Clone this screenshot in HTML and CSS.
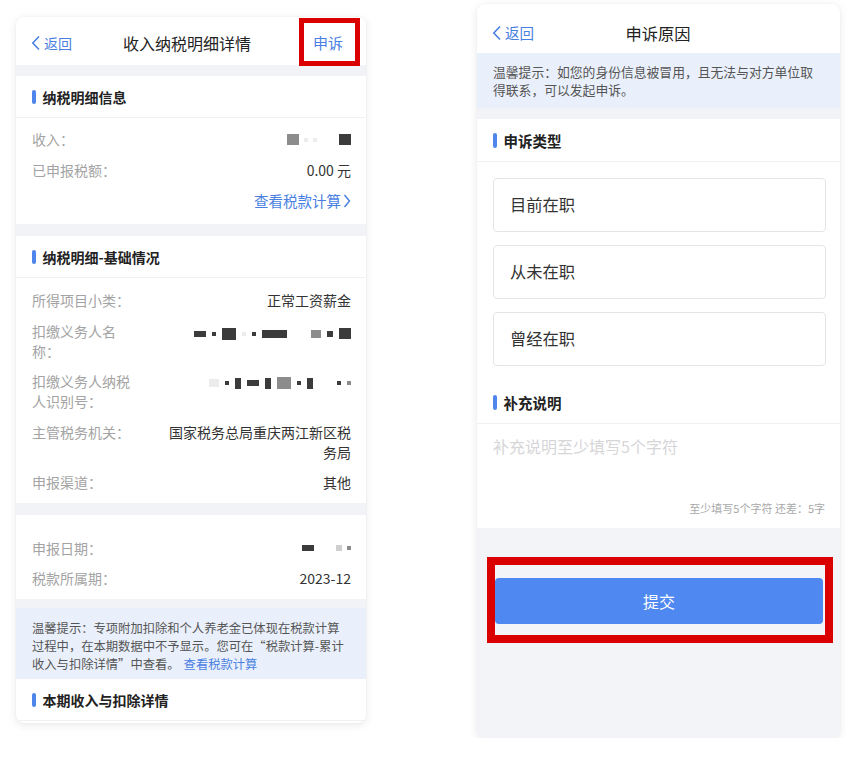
FILE: index.html
```html
<!doctype html>
<html>

<head>
  <meta charset="utf-8">
  <title>申诉</title>
  <link rel="stylesheet" href="styles.css">
</head>

<body>
  <div class="stage">

    <!-- 左：收入纳税明细详情 -->
    <div class="phone phone-left">
      <div class="nav">
        <a class="back">
          <svg class="back__icon" viewBox="0 0 10 16"><polyline points="8 1.5 1.8 8 8 14.5" /></svg>返回
        </a>
        <div class="nav__title">收入纳税明细详情</div>
        <a class="nav__action">申诉<span class="mark mark-appeal"></span></a>
      </div>

      <div class="gap"></div>

      <div class="block">
        <div class="block__title">纳税明细信息</div>
        <div class="block__body block__body--first">
          <div class="row">
            <span class="row__label">收入：</span>
            <span class="mosaic">
              <i class="px m tall wide"></i><i class="px xl sm"></i><i class="px xl sm"></i><i class="px sp"></i><i class="px d tall wide"></i>
            </span>
          </div>
          <div class="row">
            <span class="row__label">已申报税额：</span>
            <span class="row__value">0.00 元</span>
          </div>
          <div class="row row--link">
            <a class="link">查看税款计算<svg class="link__icon" viewBox="0 0 8 14"><polyline points="1.5 1 6.5 7 1.5 13" /></svg></a>
          </div>
        </div>
      </div>

      <div class="gap gap--wide"></div>

      <div class="block">
        <div class="block__title">纳税明细-基础情况</div>
        <div class="block__body block__body--detail">
          <div class="row row--wrap">
            <span class="row__label">所得项目小类：</span>
            <span class="row__value">正常工资薪金</span>
          </div>
          <div class="row row--wrap">
            <span class="row__label">扣缴义务人名称：</span>
            <span class="row__value">
              <span class="mosaic mosaic--wide">
                <i class="px d wide"></i><i class="px d sm"></i><i class="px d block14"></i><i class="px xl sm"></i><i class="px d sm"></i><i class="px d bar25"></i><i class="px sp"></i><i class="px m bar10"></i><i class="px d"></i><i class="px d tall wide"></i>
              </span>
            </span>
          </div>
          <div class="row row--wrap">
            <span class="row__label">扣缴义务人纳税人识别号：</span>
            <span class="row__value">
              <span class="mosaic mosaic--wide">
                <i class="px xl bar10"></i><i class="px d sm"></i><i class="px d tall"></i><i class="px d wide"></i><i class="px d tall"></i><i class="px m block14"></i><i class="px d sm"></i><i class="px d tall"></i><i class="px sp"></i><i class="px d sm"></i><i class="px m sm"></i>
              </span>
            </span>
          </div>
          <div class="row row--wrap">
            <span class="row__label">主管税务机关：</span>
            <span class="row__value">国家税务总局重庆两江新区税务局</span>
          </div>
          <div class="row row--wrap">
            <span class="row__label">申报渠道：</span>
            <span class="row__value">其他</span>
          </div>
        </div>
      </div>

      <div class="gap gap--wide"></div>

      <div class="block">
        <div class="block__body block__body--dates">
          <div class="row">
            <span class="row__label">申报日期：</span>
            <span class="mosaic">
              <i class="px d wide"></i><i class="px sp"></i><i class="px l"></i><i class="px m sm"></i>
            </span>
          </div>
          <div class="row">
            <span class="row__label">税款所属期：</span>
            <span class="row__value">2023-12</span>
          </div>
        </div>
      </div>

      <div class="gap gap--narrow"></div>

      <div class="tip tip--left">温馨提示：专项附加扣除和个人养老金已体现在税款计算过程中，在本期数据中不予显示。您可在“税款计算-累计收入与扣除详情”中查看。<a class="link">查看税款计算</a></div>

      <div class="block">
        <div class="block__title">本期收入与扣除详情</div>
      </div>
    </div>

    <!-- 右：申诉原因 -->
    <div class="phone phone-right">
      <div class="nav nav--right">
        <a class="back">
          <svg class="back__icon" viewBox="0 0 10 16"><polyline points="8 1.5 1.8 8 8 14.5" /></svg>返回
        </a>
        <div class="nav__title">申诉原因</div>
        <span></span>
      </div>

      <div class="tip tip--right">温馨提示：如您的身份信息被冒用，且无法与对方单位取得联系，可以发起申诉。</div>

      <div class="gap"></div>

      <div class="block block--form">
        <div class="block__title">申诉类型</div>
        <div class="options">
          <div class="option">目前在职</div>
          <div class="option">从未在职</div>
          <div class="option">曾经在职</div>
        </div>
        <div class="block__title">补充说明</div>
        <div class="remark">
          <div class="remark__placeholder">补充说明至少填写5个字符</div>
          <div class="remark__count">至少填写5个字符 还差：5字</div>
        </div>
      </div>

      <div class="footer">
        <div class="submit-wrap">
          <button class="submit">提交</button>
          <span class="mark mark-submit"></span>
        </div>
      </div>
    </div>

  </div>
</body>

</html>
```

FILE: styles.css
```css
* {
  margin: 0;
  padding: 0;
  box-sizing: border-box;
}

body {
  background: #fff;
  font-family: "Noto Sans CJK SC", "Noto Sans", sans-serif;
  color: #333;
}

.stage {
  display: flex;
  align-items: flex-start;
  padding-left: 16px;
  gap: 111px;
}

.phone {
  background: #fff;
  border-radius: 8px;
  overflow: hidden;
  box-shadow: 0 2px 10px rgba(0, 0, 0, 0.09), 0 0 2px rgba(0, 0, 0, 0.05);
}

.phone-left {
  width: 350px;
  height: 706px;
  margin-top: 17px;
}

.phone-right {
  width: 363px;
  height: 734px;
  margin-top: 4px;
  display: flex;
  flex-direction: column;
}

/* 导航 */
.nav {
  height: 48px;
  display: grid;
  grid-template-columns: 1fr auto 1fr;
  align-items: center;
  padding: 4px 23px 0 15px;
}

.nav--right {
  height: 49px;
  padding: 8px 16px 0 15px;
}

.back {
  display: flex;
  align-items: center;
  color: #4a7fe2;
  font-size: 14px;
  line-height: 20px;
}

.nav--right .back {
  font-size: 14.5px;
}

.back__icon {
  width: 10px;
  height: 16px;
  margin-right: 3px;
  fill: none;
  stroke: #4a7fe2;
  stroke-width: 1.6;
}

.nav__title {
  font-size: 16px;
  color: #222;
}

.nav--right .nav__title {
  font-size: 16.3px;
}

.nav__action {
  justify-self: end;
  position: relative;
  font-size: 15px;
  line-height: 20px;
  color: #4a7fe2;
}

/* 标注框 */
.mark {
  position: absolute;
  border: 5px solid #db0000;
  pointer-events: none;
}

.mark-appeal {
  top: -15px;
  bottom: -13px;
  left: -14px;
  right: -17px;
}

.mark-submit {
  border-width: 8px;
  top: -21px;
  bottom: -19px;
  left: -8px;
  right: -10px;
}

/* 分隔 */
.gap {
  height: 11px;
  background: #f2f3f7;
}

.gap--wide {
  height: 12px;
}

.gap--narrow {
  height: 9px;
}

/* 区块 */
.block__title {
  display: flex;
  align-items: center;
  height: 42px;
  padding: 0 16px;
  font-size: 14px;
  font-weight: bold;
  color: #222;
  border-bottom: 1px solid #f1f1f3;
}

.block__title:before {
  content: "";
  width: 3.5px;
  height: 14px;
  border-radius: 2px;
  background: #4f86ec;
  margin-right: 7px;
}

.block__body {
  padding: 6px 15px 8px 16px;
  font-size: 14px;
}

.block__body--detail {
  padding-top: 12px;
  padding-bottom: 11px;
  display: flex;
  flex-direction: column;
  gap: 10.5px;
}

.block__body--dates {
  padding-top: 18px;
  padding-bottom: 6px;
}

.row {
  display: flex;
  justify-content: space-between;
  align-items: center;
  line-height: 31px;
}

.block__body--dates .row {
  line-height: 30px;
}

.row--wrap {
  align-items: flex-start;
  line-height: 20px;
}

.row__label {
  color: #a3a3a3;
  flex: 0 0 100px;
}

.row__value {
  color: #333;
  text-align: right;
}

.row--wrap .row__value {
  flex: 0 0 188px;
}

.row--link {
  justify-content: flex-end;
  line-height: 30px;
}

.link {
  color: #4a7fe2;
}

.tip .link {
  margin-left: 4px;
}

.row--link .link {
  display: flex;
  align-items: center;
  font-size: 14.5px;
}

.link__icon {
  width: 8px;
  height: 14px;
  margin-left: 2px;
  fill: none;
  stroke: #4a7fe2;
  stroke-width: 1.5;
}

/* 打码 */
.mosaic {
  display: inline-flex;
  align-items: center;
  gap: 5px;
}

.mosaic--wide {
  height: 20px;
  gap: 6px;
}

.px {
  display: block;
  width: 6px;
  height: 6px;
  background: #bbb;
}

.px.d {
  background: #3b3b3b;
}

.px.m {
  background: #8c8c8c;
}

.px.l {
  background: #cfcfcf;
}

.px.xl {
  background: #ececec;
}

.px.tall {
  height: 11px;
}

.px.wide {
  width: 12px;
}

.px.sm {
  width: 4px;
  height: 4px;
}

.px.sp {
  width: 12px;
  background: transparent;
}

.px.block14 {
  width: 14px;
  height: 12px;
}

.px.bar25 {
  width: 25px;
  height: 8px;
}

.px.bar10 {
  width: 10px;
  height: 8px;
}

/* 提示 */
.tip {
  background: #eaf0fb;
  color: #555;
}

.tip--left {
  font-size: 12.3px;
  line-height: 18px;
  padding: 11px 16px 6px;
}

.tip--right {
  height: 55px;
  font-size: 12.8px;
  line-height: 18px;
  padding: 10px 16px 0;
}

/* 表单 */
.block--form .block__title {
  height: 43px;
  font-size: 14.5px;
}

.block--form .block__title:before {
  height: 15px;
}

.options {
  display: flex;
  flex-direction: column;
  gap: 13px;
  padding: 16px 14px 15px 16px;
}

.option {
  height: 54px;
  display: flex;
  align-items: center;
  padding-left: 16px;
  padding-bottom: 3px;
  border: 1px solid #e4e4e6;
  border-radius: 4px;
  font-size: 16.3px;
  color: #333;
}

.remark {
  height: 104px;
  padding: 11px 15px 0 16px;
  display: flex;
  flex-direction: column;
  justify-content: space-between;
  padding-bottom: 12px;
}

.remark__placeholder {
  font-size: 16px;
  line-height: 22px;
  color: #d6d6d8;
}

.remark__count {
  align-self: flex-end;
  font-size: 11px;
  line-height: 16px;
  color: #a8a8a8;
}

.footer {
  flex: 1;
  background: #f3f4f8;
  padding: 50px 17px 0 18px;
}

.submit-wrap {
  position: relative;
}

.submit {
  display: block;
  width: 100%;
  height: 46px;
  border: none;
  border-radius: 4px;
  background: #4f88f0;
  color: #fff;
  font-family: inherit;
  font-size: 16px;
}
```
